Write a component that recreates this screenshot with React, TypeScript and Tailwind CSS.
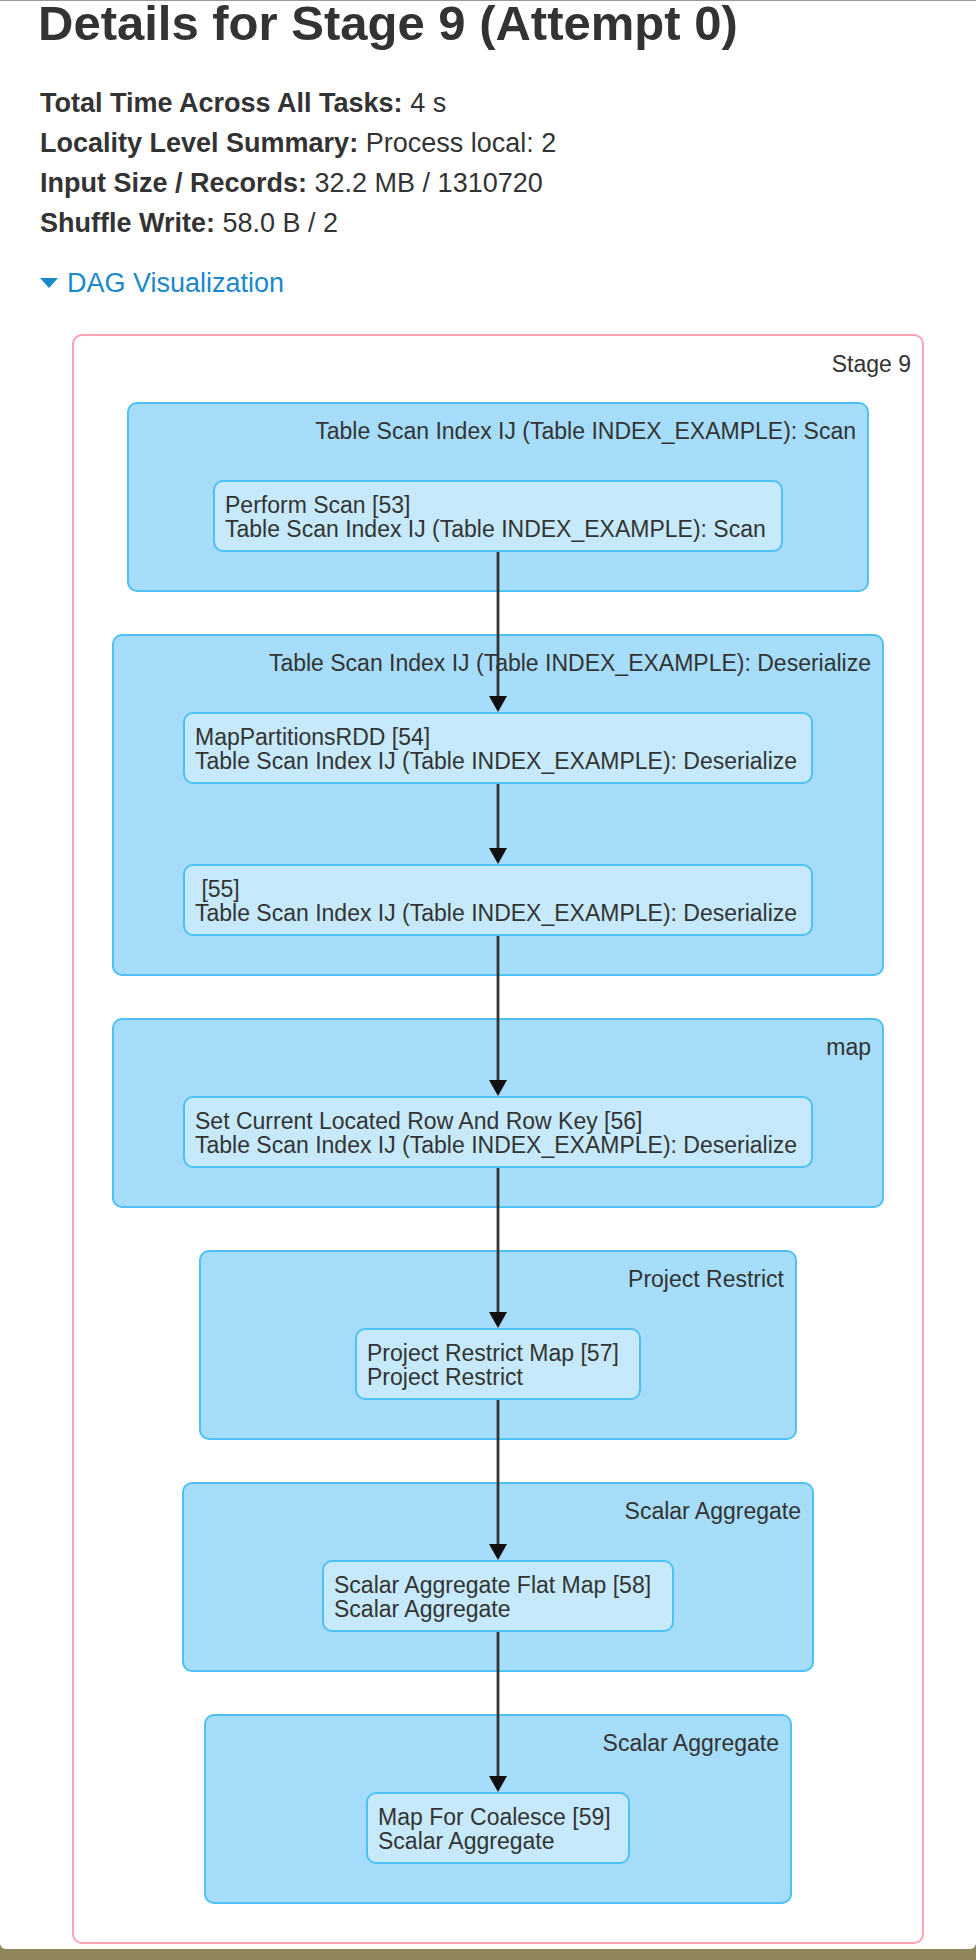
import type { ReactNode } from 'react'

// Spark UI stage page: summary lines and the stage DAG.
// Boxes are laid out in flow; the edges are one svg laid over the stage box.
type DagNode = { title: string; scope: string; width: string }
type DagCluster = { label: string; width: string; nodes: DagNode[] }

const TABLE_SCAN = 'Table Scan Index IJ (Table INDEX_EXAMPLE): Scan'
const DESERIALIZE = 'Table Scan Index IJ (Table INDEX_EXAMPLE): Deserialize'

const CLUSTERS: DagCluster[] = [
  {
    label: TABLE_SCAN,
    width: 'w-[742px]',
    nodes: [{ title: 'Perform Scan [53]', scope: TABLE_SCAN, width: 'w-[570px]' }],
  },
  {
    label: DESERIALIZE,
    width: 'w-[772px]',
    nodes: [
      { title: 'MapPartitionsRDD [54]', scope: DESERIALIZE, width: 'w-[630px]' },
      { title: ' [55]', scope: DESERIALIZE, width: 'w-[630px]' },
    ],
  },
  {
    label: 'map',
    width: 'w-[772px]',
    nodes: [{ title: 'Set Current Located Row And Row Key [56]', scope: DESERIALIZE, width: 'w-[630px]' }],
  },
  {
    label: 'Project Restrict',
    width: 'w-[598px]',
    nodes: [{ title: 'Project Restrict Map [57]', scope: 'Project Restrict', width: 'w-[286px]' }],
  },
  {
    label: 'Scalar Aggregate',
    width: 'w-[632px]',
    nodes: [{ title: 'Scalar Aggregate Flat Map [58]', scope: 'Scalar Aggregate', width: 'w-[352px]' }],
  },
  {
    label: 'Scalar Aggregate',
    width: 'w-[588px]',
    nodes: [{ title: 'Map For Coalesce [59]', scope: 'Scalar Aggregate', width: 'w-[264px]' }],
  },
]

// edge segments [from node bottom, to next node top], relative to the stage box
const EDGES: [number, number][] = [
  [216, 376],
  [448, 528],
  [600, 760],
  [832, 992],
  [1064, 1224],
  [1296, 1456],
]
const EDGE_X = 424

function Summary({ label, children }: { label: string; children: ReactNode }) {
  return (
    <div className="leading-[40px]">
      <strong className="font-bold">{label}</strong> {children}
    </div>
  )
}

function NodeBox({ node }: { node: DagNode }) {
  return (
    <div
      className={`${node.width} h-[72px] shrink-0 rounded-[10px] border-2 border-[#4fc0f6] bg-[#c6eafc] pl-[10px] pt-[11px] text-[23px] leading-[24px] whitespace-pre text-[#333]`}
    >
      <div>{node.title}</div>
      <div>{node.scope}</div>
    </div>
  )
}

function ClusterBox({ cluster }: { cluster: DagCluster }) {
  return (
    <div
      className={`${cluster.width} flex flex-col items-center rounded-[10px] border-2 border-[#4fc0f6] bg-[#a6ddfa] pt-[15px] pb-[38px]`}
    >
      <div className="self-end pr-[11px] text-[23px] leading-[24px] whitespace-nowrap text-[#333]">
        {cluster.label}
      </div>
      <div className="mt-[37px] flex flex-col items-center gap-[80px]">
        {cluster.nodes.map((n, i) => (
          <NodeBox key={i} node={n} />
        ))}
      </div>
    </div>
  )
}

export default function App() {
  return (
    <div className="h-[1960px] w-full bg-[#8f8559] font-['Liberation_Sans',Arial,sans-serif]">
      <div className="h-[1949px] rounded-b-[6px] border-t border-[#9a9a9a] bg-white pl-10 text-[#333]">
        <h3 className="-ml-[2px] text-[49px] font-bold leading-[44px]">Details for Stage 9 (Attempt 0)</h3>

        <div className="mt-[38px] text-[27px]">
          <Summary label="Total Time Across All Tasks:">4 s</Summary>
          <Summary label="Locality Level Summary:">Process local: 2</Summary>
          <Summary label="Input Size / Records:">32.2 MB / 1310720</Summary>
          <Summary label="Shuffle Write:">58.0 B / 2</Summary>
        </div>

        <a className="mt-5 flex h-10 w-fit items-center text-[27px] text-[#1a88cc]">
          <span className="mr-[9px] h-0 w-0 border-t-[10px] border-r-[9.5px] border-l-[9.5px] border-t-[#1a88cc] border-r-transparent border-l-transparent" />
          DAG Visualization
        </a>

        <div className="relative mt-[31px] ml-8 flex w-[852px] flex-col items-center rounded-[10px] border-2 border-[#fba3b3] pt-4 pb-[38px]">
          <div className="self-end pr-[11px] text-[23px] leading-[24px]">Stage 9</div>
          <div className="mt-[26px] flex flex-col items-center gap-[42px]">
            {CLUSTERS.map((c, i) => (
              <ClusterBox key={i} cluster={c} />
            ))}
          </div>

          <svg className="pointer-events-none absolute inset-0 h-full w-full">
            {EDGES.map(([from, to], i) => (
              <g key={i}>
                <line x1={EDGE_X} y1={from} x2={EDGE_X} y2={to - 8} stroke="#333" strokeWidth={2.8} />
                <polygon points={`${EDGE_X - 9},${to - 16} ${EDGE_X + 9},${to - 16} ${EDGE_X},${to}`} fill="#111" />
              </g>
            ))}
          </svg>
        </div>
      </div>
    </div>
  )
}
